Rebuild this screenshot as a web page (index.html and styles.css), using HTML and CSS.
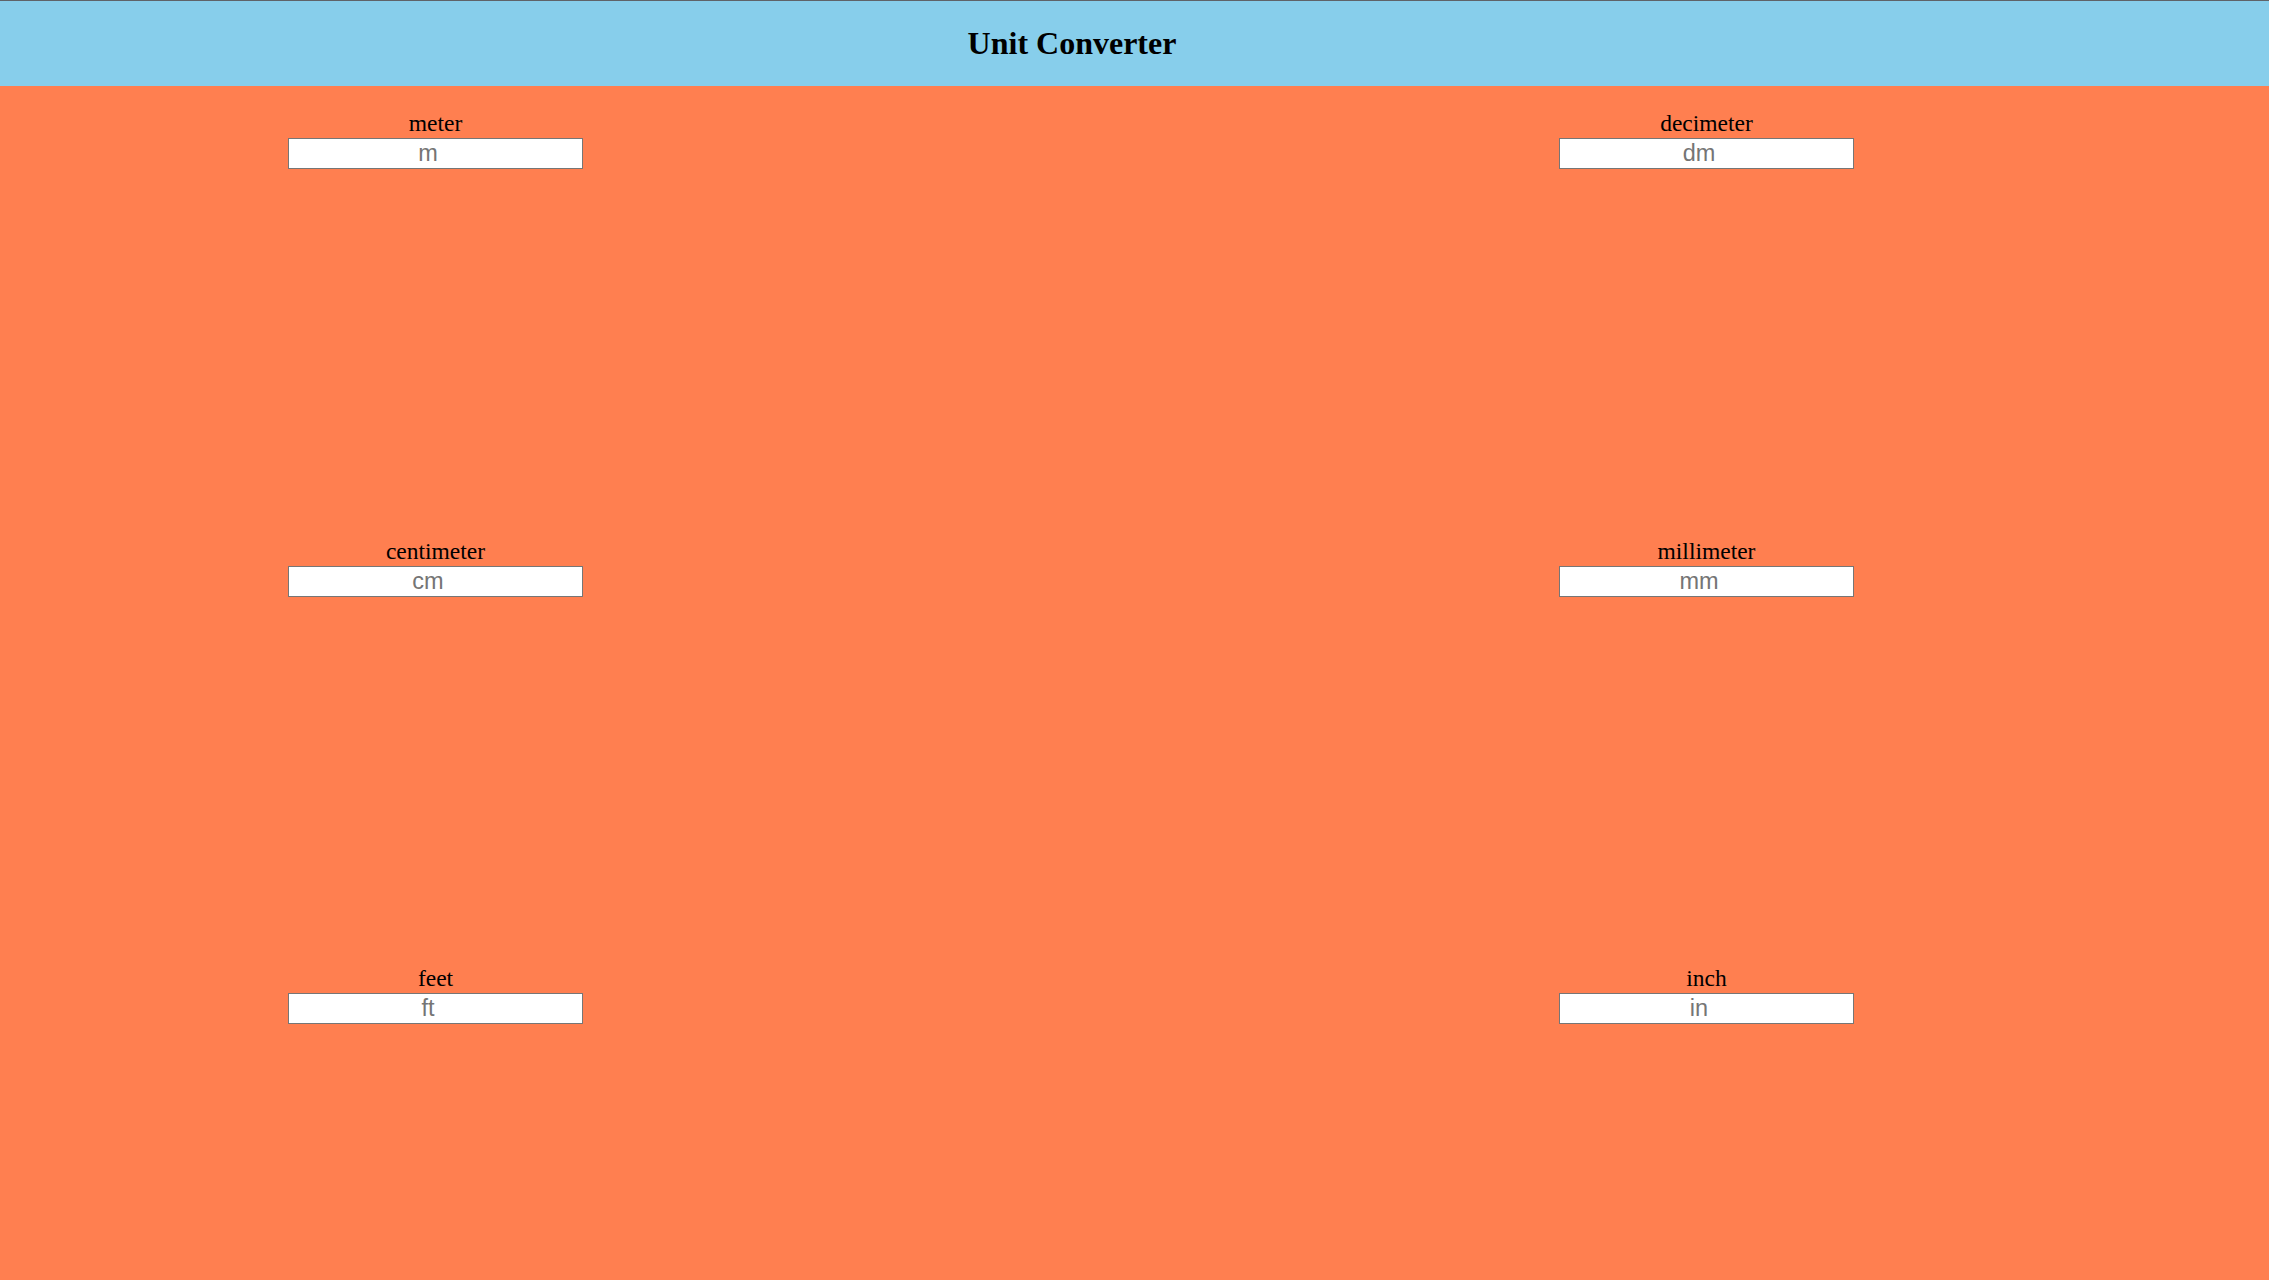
FILE: index.html
```html
<!DOCTYPE html>
<html>
<head>
<meta charset="utf-8">
<title>Unit Converter</title>
<link rel="stylesheet" href="styles.css">
</head>
<body>
<header class="top">
  <h1 class="title">Unit Converter</h1>
</header>
<main class="grid">
  <div class="field"><label class="label">meter</label><input class="box" type="text" placeholder="m"></div>
  <div class="field"><label class="label">decimeter</label><input class="box" type="text" placeholder="dm"></div>
  <div class="field"><label class="label">centimeter</label><input class="box" type="text" placeholder="cm"></div>
  <div class="field"><label class="label">millimeter</label><input class="box" type="text" placeholder="mm"></div>
  <div class="field"><label class="label">feet</label><input class="box" type="text" placeholder="ft"></div>
  <div class="field"><label class="label">inch</label><input class="box" type="text" placeholder="in"></div>
</main>
</body>
</html>
```
FILE: styles.css
```css
html, body {
  margin: 0;
  padding: 0;
}
body {
  background: #ff7f50;
  font-family: "Liberation Serif", "Times New Roman", serif;
  min-height: 1280px;
  border-top: 1px solid #5f6368;
}
.top {
  background: #87ceeb;
  height: 85px;
  display: flex;
  align-items: center;
  justify-content: center;
  padding-right: 125px;
}
.title {
  margin: 0;
  font-size: 32px;
  font-weight: bold;
  color: #000;
}
.grid {
  display: grid;
  grid-template-columns: 871px 871px;
  column-gap: 400px;
  row-gap: 368.5px;
  padding-top: 24px;
}
.field {
  display: flex;
  flex-direction: column;
  align-items: center;
}
.label {
  font-size: 23.5px;
  line-height: 26px;
  margin-bottom: 2px;
  color: #000;
}
.box {
  box-sizing: border-box;
  width: 295px;
  height: 31px;
  margin: 0;
  border: 1px solid #767676;
  background: #fff;
  font-family: "Liberation Sans", Arial, sans-serif;
  font-size: 23.5px;
  text-align: center;
  padding: 0 16px 0 1px;
  color: #000;
}
.box::placeholder {
  color: #757575;
}
```
